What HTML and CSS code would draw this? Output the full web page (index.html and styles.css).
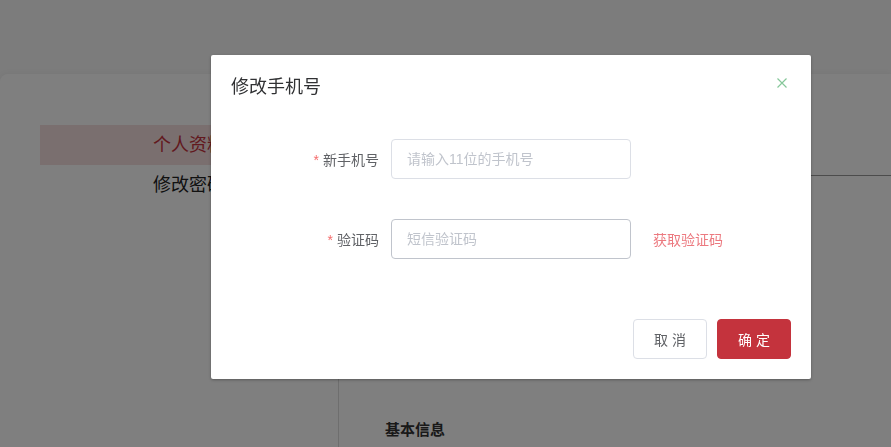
FILE: index.html
```html
<!DOCTYPE html>
<html lang="zh-CN">
<head>
<meta charset="utf-8">
<title>修改手机号</title>
<link rel="stylesheet" href="styles.css">
</head>
<body>
<div class="page">
  <div class="topbar"></div>
  <div class="card">
    <aside class="menu">
      <div class="menu-item active">个人资料</div>
      <div class="menu-item">修改密码</div>
    </aside>
    <main class="content">
      <div class="tabs">
        <span class="tab">账号信息</span>
      </div>
      <h3 class="section-title">基本信息</h3>
    </main>
  </div>
</div>

<div class="overlay"></div>

<div class="dialog">
  <div class="dialog-header">
    <span class="dialog-title">修改手机号</span>
    <button class="dialog-close" aria-label="关闭">
      <svg width="10" height="10" viewBox="0 0 10 10"><path d="M0.5 0.5L9.5 9.5M9.5 0.5L0.5 9.5" stroke="#86c79a" stroke-width="1.2" fill="none"/></svg>
    </button>
  </div>
  <div class="dialog-body">
    <div class="form-item">
      <label class="form-label"><span class="req">*</span>新手机号</label>
      <input class="form-input" type="text" placeholder="请输入11位的手机号">
    </div>
    <div class="form-item">
      <label class="form-label"><span class="req">*</span>验证码</label>
      <input class="form-input hover" type="text" placeholder="短信验证码">
      <a class="code-link">获取验证码</a>
    </div>
  </div>
  <div class="dialog-footer">
    <button class="btn btn-default">取 消</button>
    <button class="btn btn-primary">确 定</button>
  </div>
</div>
</body>
</html>
```

FILE: styles.css
```css
* { box-sizing: border-box; }
html, body { margin: 0; padding: 0; height: 100%; overflow: hidden; }
body {
  font-family: "Liberation Sans", "Noto Sans CJK SC", sans-serif;
  background: #f8f8f8;
  color: #303133;
}
.page { height: 447px; display: flex; flex-direction: column; }
.topbar { height: 74px; flex: none; }
.card {
  flex: 1;
  display: flex;
  background: #ffffff;
  border-top-left-radius: 8px;
  box-shadow: 0 0 6px rgba(0,0,0,0.06);
}
.menu {
  width: 339px;
  flex: none;
  border-right: 1px solid #dcdcdc;
  padding-top: 51px;
  padding-left: 40px;
}
.menu-item {
  height: 40px;
  line-height: 40px;
  text-align: center;
  font-size: 18px;
  color: #222;
}
.menu-item.active { background: #f4dede; color: #c4333d; }
.content { flex: 1; padding: 61px 0 0 46px; }
.tabs {
  height: 41px;
  border-bottom: 1px solid #999;
  font-size: 16px;
  line-height: 40px;
}
.tab { color: #333; }
.section-title {
  margin: 242px 0 0;
  font-size: 15px;
  font-weight: bold;
  color: #333;
}
.overlay {
  position: fixed;
  inset: 0;
  background: rgba(0,0,0,0.5);
}
.dialog {
  position: absolute;
  left: 211px;
  top: 55px;
  width: 600px;
  background: #fff;
  border-radius: 2px;
  box-shadow: 0 1px 3px rgba(0,0,0,0.3);
}
.dialog-header {
  padding: 20px 20px 10px;
  display: flex;
  justify-content: space-between;
  align-items: center;
}
.dialog-title { font-size: 18px; line-height: 24px; color: #303133; }
.dialog-close {
  border: 0;
  background: none;
  padding: 0;
  width: 10px;
  height: 10px;
  display: flex;
  margin-top: -8px;
  margin-right: 4px;
}
.dialog-body { padding: 30px 20px 10px; }
.form-item {
  display: flex;
  align-items: center;
  height: 40px;
  margin-bottom: 40px;
}
.form-label {
  width: 160px;
  padding-right: 12px;
  text-align: right;
  font-size: 14px;
  color: #606266;
}
.req { color: #f56c6c; margin-right: 4px; }
.form-input {
  width: 240px;
  height: 40px;
  border: 1px solid #dcdfe6;
  border-radius: 4px;
  padding: 0 15px;
  font-family: inherit;
  font-size: 14px;
  color: #606266;
  outline: none;
}
.form-input.hover { border-color: #c0c4cc; }
.form-input::placeholder { color: #c0c4cc; }
.code-link {
  margin-left: 22px;
  font-size: 14px;
  color: #ec7a80;
}
.dialog-footer {
  padding: 10px 20px 20px;
  display: flex;
  justify-content: flex-end;
  gap: 10px;
}
.btn {
  width: 74px;
  height: 40px;
  border-radius: 4px;
  font-family: inherit;
  font-size: 14px;
  padding: 0;
}
.btn-default { background: #fff; border: 1px solid #dcdfe6; color: #606266; }
.btn-primary { background: #c4333d; border: 1px solid #c4333d; color: #fff; }
```
